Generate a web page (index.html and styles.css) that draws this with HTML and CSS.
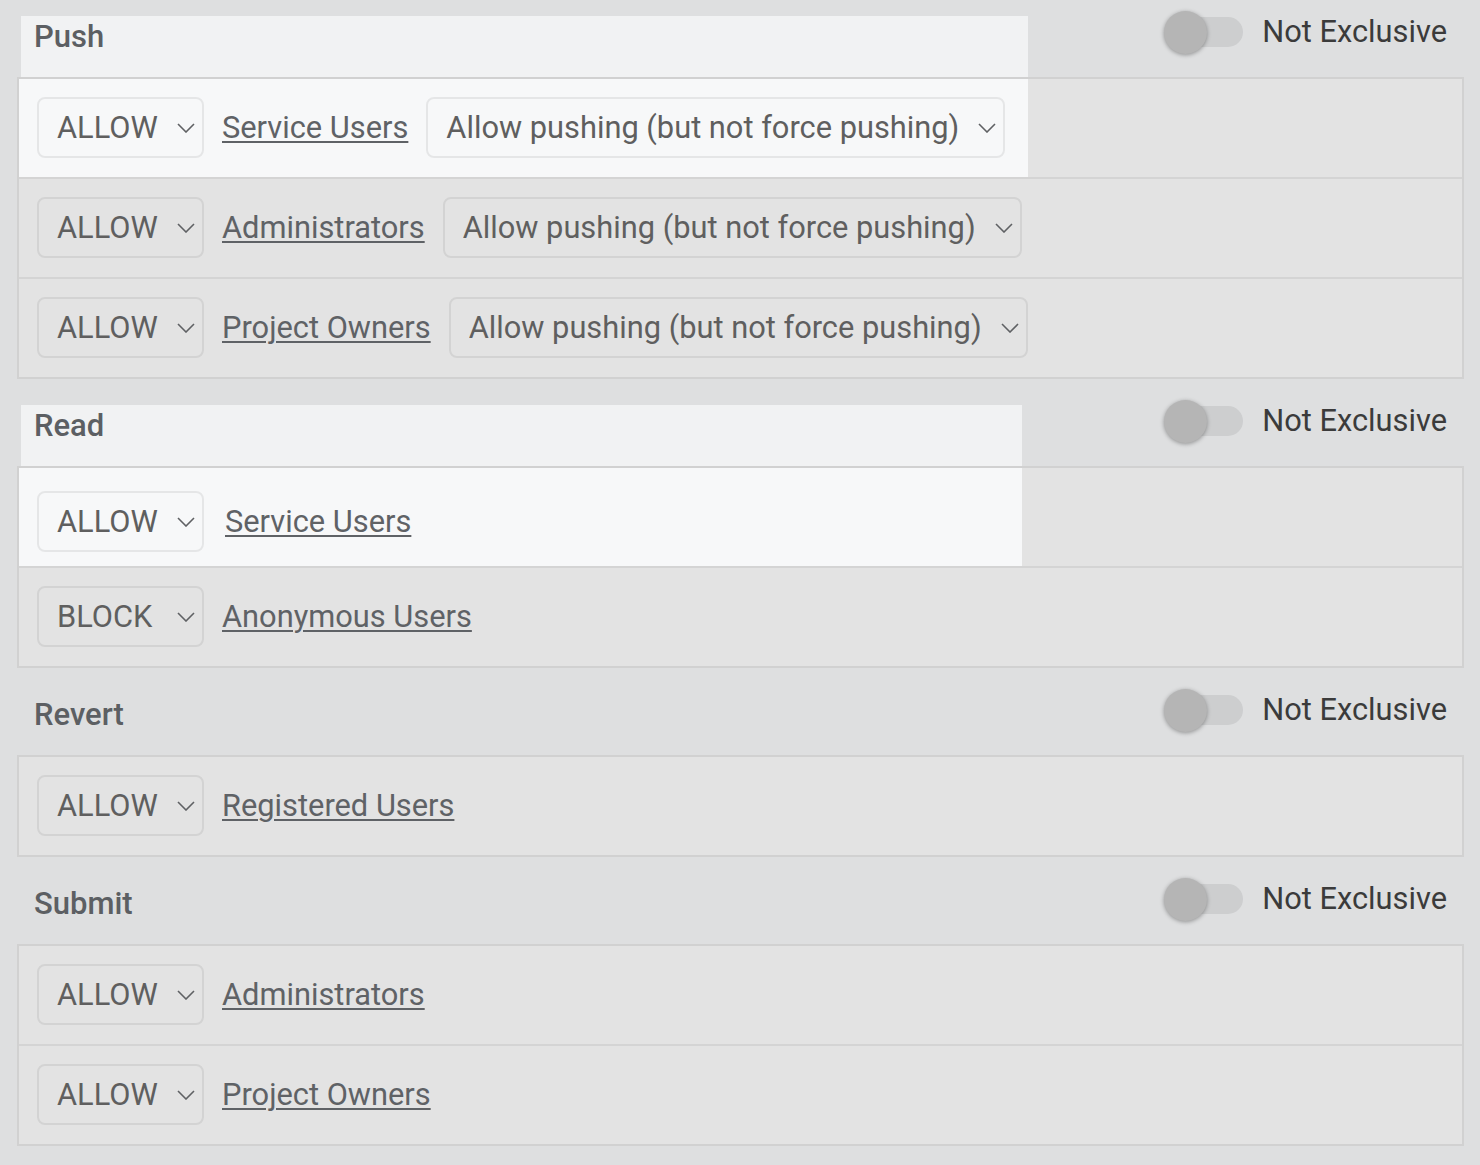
FILE: index.html
```html
<!DOCTYPE html>
<html lang="en">
<head>
<meta charset="utf-8">
<title>Access</title>
<link rel="stylesheet" href="styles.css">
</head>
<body>
<main class="page">

  <section class="perm perm--push">
    <header class="perm__head perm__head--hl">
      <h3 class="perm__title">Push</h3>
      <label class="excl"><span class="switch"><span class="switch__knob"></span></span><span class="excl__label">Not Exclusive</span></label>
    </header>
    <div class="rules">
      <div class="rule rule--hl">
        <span class="sel"><select class="sel__input"><option>ALLOW</option><option>DENY</option><option>BLOCK</option></select><svg class="sel__icon" viewBox="0 0 18 10"><path d="M1 1l8 8 8-8"/></svg></span>
        <a class="group" href="#">Service Users</a>
        <span class="sel"><select class="sel__input"><option>Allow pushing (but not force pushing)</option></select><svg class="sel__icon" viewBox="0 0 18 10"><path d="M1 1l8 8 8-8"/></svg></span>
      </div>
      <div class="rule">
        <span class="sel"><select class="sel__input"><option>ALLOW</option><option>DENY</option><option>BLOCK</option></select><svg class="sel__icon" viewBox="0 0 18 10"><path d="M1 1l8 8 8-8"/></svg></span>
        <a class="group" href="#">Administrators</a>
        <span class="sel"><select class="sel__input"><option>Allow pushing (but not force pushing)</option></select><svg class="sel__icon" viewBox="0 0 18 10"><path d="M1 1l8 8 8-8"/></svg></span>
      </div>
      <div class="rule">
        <span class="sel"><select class="sel__input"><option>ALLOW</option><option>DENY</option><option>BLOCK</option></select><svg class="sel__icon" viewBox="0 0 18 10"><path d="M1 1l8 8 8-8"/></svg></span>
        <a class="group" href="#">Project Owners</a>
        <span class="sel"><select class="sel__input"><option>Allow pushing (but not force pushing)</option></select><svg class="sel__icon" viewBox="0 0 18 10"><path d="M1 1l8 8 8-8"/></svg></span>
      </div>
    </div>
  </section>

  <section class="perm perm--read">
    <header class="perm__head perm__head--hl">
      <h3 class="perm__title">Read</h3>
      <label class="excl"><span class="switch"><span class="switch__knob"></span></span><span class="excl__label">Not Exclusive</span></label>
    </header>
    <div class="rules">
      <div class="rule rule--hl rule--shifted">
        <span class="sel"><select class="sel__input"><option>ALLOW</option><option>DENY</option><option>BLOCK</option></select><svg class="sel__icon" viewBox="0 0 18 10"><path d="M1 1l8 8 8-8"/></svg></span>
        <a class="group" href="#">Service Users</a>
      </div>
      <div class="rule">
        <span class="sel"><select class="sel__input"><option>ALLOW</option><option>DENY</option><option selected>BLOCK</option></select><svg class="sel__icon" viewBox="0 0 18 10"><path d="M1 1l8 8 8-8"/></svg></span>
        <a class="group" href="#">Anonymous Users</a>
      </div>
    </div>
  </section>

  <section class="perm">
    <header class="perm__head">
      <h3 class="perm__title">Revert</h3>
      <label class="excl"><span class="switch"><span class="switch__knob"></span></span><span class="excl__label">Not Exclusive</span></label>
    </header>
    <div class="rules">
      <div class="rule">
        <span class="sel"><select class="sel__input"><option>ALLOW</option><option>DENY</option><option>BLOCK</option></select><svg class="sel__icon" viewBox="0 0 18 10"><path d="M1 1l8 8 8-8"/></svg></span>
        <a class="group" href="#">Registered Users</a>
      </div>
    </div>
  </section>

  <section class="perm">
    <header class="perm__head">
      <h3 class="perm__title">Submit</h3>
      <label class="excl"><span class="switch"><span class="switch__knob"></span></span><span class="excl__label">Not Exclusive</span></label>
    </header>
    <div class="rules">
      <div class="rule">
        <span class="sel"><select class="sel__input"><option>ALLOW</option><option>DENY</option><option>BLOCK</option></select><svg class="sel__icon" viewBox="0 0 18 10"><path d="M1 1l8 8 8-8"/></svg></span>
        <a class="group" href="#">Administrators</a>
      </div>
      <div class="rule">
        <span class="sel"><select class="sel__input"><option>ALLOW</option><option>DENY</option><option>BLOCK</option></select><svg class="sel__icon" viewBox="0 0 18 10"><path d="M1 1l8 8 8-8"/></svg></span>
        <a class="group" href="#">Project Owners</a>
      </div>
    </div>
  </section>

</main>
</body>
</html>
```

FILE: styles.css
```css
* { box-sizing: border-box; }

html, body {
  margin: 0;
}

body {
  background: #dedfe0;
  font-family: Roboto, "Liberation Sans", sans-serif;
  color: #5f6164;
}

.page {
  padding: 16px 16px 0 17px;
}

.perm {
  margin-bottom: 26px;
}

.perm--push { --hl-head: 1011px; --hl-row: 1009px; }
.perm--read { --hl-head: 1005px; --hl-row: 1003px; }

.perm__head {
  display: flex;
  justify-content: space-between;
  align-items: flex-start;
  height: 61px;
  padding: 0 17px 0 17px;
}

.perm__head--hl {
  background: linear-gradient(to right, transparent 4px, #f1f2f3 4px, #f1f2f3 var(--hl-head), transparent var(--hl-head));
}

.perm__title {
  margin: 5px 0 0;
  font-size: 31px;
  line-height: 32px;
  font-weight: 500;
  color: #5c5f63;
}

.excl {
  display: flex;
  align-items: center;
  height: 32px;
  gap: 19px;
}

.switch {
  display: flex;
  align-items: center;
  width: 77px;
  height: 30px;
  border-radius: 15px;
  background: #cdcecf;
}

.switch__knob {
  flex: none;
  width: 43px;
  height: 43px;
  margin-left: -2px;
  border-radius: 50%;
  background: #b5b5b5;
  box-shadow: 0 1px 4px rgba(0, 0, 0, 0.35);
}

.excl__label {
  font-size: 30.8px;
  line-height: 32px;
  color: #3b3b3b;
}

.rules {
  border: 2px solid #d1d1d1;
  background: #e3e3e3;
}

.rule {
  display: flex;
  align-items: center;
  gap: 18px;
  padding: 18px 18px 19px;
}

.rule + .rule {
  border-top: 2px solid #d4d4d4;
}

.rule--hl {
  background: linear-gradient(to right, #f7f8f9 var(--hl-row), transparent var(--hl-row));
}

.rule--shifted {
  padding-top: 23px;
  padding-bottom: 14px;
}

.rule--shifted .group {
  margin-left: 3px;
}

.sel {
  position: relative;
  display: inline-flex;
  flex: none;
}

.sel__input {
  -webkit-appearance: none;
  appearance: none;
  font-family: inherit;
  font-size: 30.8px;
  color: #5f5f5f;
  height: 61px;
  padding: 0 44px 0 18px;
  border: 2px solid rgba(0, 0, 0, 0.07);
  border-radius: 8px;
  background: transparent;
}

.sel__icon {
  position: absolute;
  right: 9px;
  top: 50%;
  width: 18px;
  height: 10px;
  margin-top: -5px;
  pointer-events: none;
  fill: none;
  stroke: #5f6164;
  stroke-width: 1.6;
}

.group {
  font-size: 30.8px;
  color: #5f6266;
  text-decoration: underline;
  text-decoration-thickness: 2px;
  text-underline-offset: 3px;
}
```
